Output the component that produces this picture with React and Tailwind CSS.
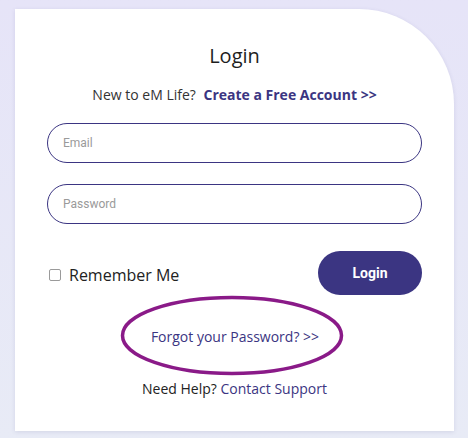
export default function App() {
  return (
    <div className="w-[468px] h-[438px] overflow-hidden bg-gradient-to-b from-[#e6e4f8] to-[#e8ebf6] pt-[9px] pl-[15px] font-['Open_Sans',sans-serif]">
      <div className="w-[439px] h-[422px] bg-white rounded-tr-[95px] shadow-[0_1px_4px_rgba(60,60,120,0.12)] px-8 pt-[33px]">
        {/* Heading */}
        <h1 className="text-center text-[20px] leading-[28px] text-[#1e1e1e] font-medium">Login</h1>
        <p className="mt-[15px] text-center text-[14px] leading-[20px] text-[#333]">
          New to eM Life?{' '}
          <a className="ml-1 font-bold text-[#3b3582]">Create a Free Account &gt;&gt;</a>
        </p>

        {/* Fields */}
        <input
          type="text"
          placeholder="Email"
          className="mt-[18px] block w-full h-[40px] rounded-full border border-[#3b3582] px-[15px] text-[12px] font-['Roboto',sans-serif] placeholder:text-[#9a9a9a] outline-none"
        />
        <input
          type="password"
          placeholder="Password"
          className="mt-[21px] block w-full h-[40px] rounded-full border border-[#3b3582] px-[15px] text-[12px] font-['Roboto',sans-serif] placeholder:text-[#9a9a9a] outline-none"
        />

        {/* Remember + submit */}
        <div className="mt-[27px] flex items-center justify-between">
          <label className="flex items-center gap-[8px] pl-[2px] pt-[4px]">
            <span className="w-[12px] h-[12px] rounded-[2px] border border-[#9a9a9a] bg-white" />
            <span className="text-[16px] leading-[20px] text-[#222]">Remember Me</span>
          </label>
          <button className="w-[104px] h-[44px] rounded-full bg-[#3b3582] text-white text-[14px] font-bold font-['Roboto',sans-serif]">
            Login
          </button>
        </div>

        {/* Forgot password, circled */}
        <div className="relative h-[80px] flex items-center justify-center">
          <svg className="absolute left-[73px] top-0" width="224" height="81" viewBox="0 0 224 81">
            <ellipse cx="112" cy="40.5" rx="109.5" ry="38" fill="none" stroke="#8a1a88" strokeWidth="3.5" />
          </svg>
          <a className="relative text-[14px] leading-[20px] text-[#3b3582] pt-[3px] pl-[1px]">Forgot your Password? &gt;&gt;</a>
        </div>

        <p className="mt-[4px] text-center text-[14px] leading-[20px] text-[#222]">
          Need Help? <a className="text-[#3b3582]">Contact Support</a>
        </p>
      </div>
    </div>
  )
}
